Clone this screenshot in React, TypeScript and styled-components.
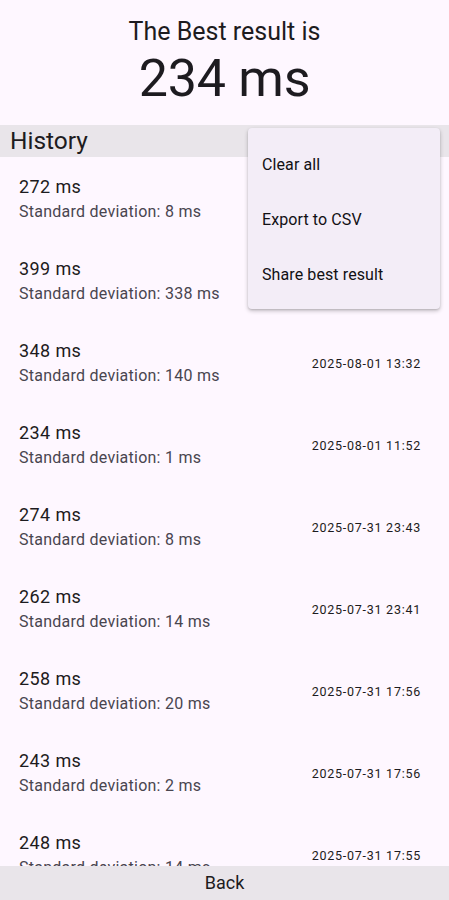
import styled, { createGlobalStyle } from "styled-components";
import { FC } from "react";

interface HistoryEntry {
  value: number;
  deviation: number;
  date: string;
}

const entries: HistoryEntry[] = [
  { value: 272, deviation: 8, date: "2025-08-01 14:10" },
  { value: 399, deviation: 338, date: "2025-08-01 13:40" },
  { value: 348, deviation: 140, date: "2025-08-01 13:32" },
  { value: 234, deviation: 1, date: "2025-08-01 11:52" },
  { value: 274, deviation: 8, date: "2025-07-31 23:43" },
  { value: 262, deviation: 14, date: "2025-07-31 23:41" },
  { value: 258, deviation: 20, date: "2025-07-31 17:56" },
  { value: 243, deviation: 2, date: "2025-07-31 17:56" },
  { value: 248, deviation: 14, date: "2025-07-31 17:55" },
];

const menuItems = ["Clear all", "Export to CSV", "Share best result"];

const App: FC = () => {
  return (
    <>
      <GlobalStyle />
      <Page>
        <Header>
          <Caption>The Best result is</Caption>
          <BestValue>234 ms</BestValue>
        </Header>
        <SectionBar>History</SectionBar>
        <List>
          {entries.map((e, i) => (
            <Row key={i}>
              <RowText>
                <RowTitle>{e.value} ms</RowTitle>
                <RowSubtitle>Standard deviation: {e.deviation} ms</RowSubtitle>
              </RowText>
              <RowDate>{e.date}</RowDate>
            </Row>
          ))}
        </List>
        <BackBar>Back</BackBar>
        <Menu>
          {menuItems.map((item) => (
            <MenuItem key={item}>{item}</MenuItem>
          ))}
        </Menu>
      </Page>
    </>
  );
};

const GlobalStyle = createGlobalStyle`
  html, body {
    margin: 0;
    padding: 0;
    background: #fef7ff;
  }
  body {
    font-family: Roboto, "Noto Sans", sans-serif;
    color: #1d1b20;
  }
`;

const Page = styled.div`
  position: relative;
  display: flex;
  flex-direction: column;
  width: 449px;
  height: 900px;
  overflow: hidden;
  background: #fef7ff;
`;

const Header = styled.div`
  display: flex;
  flex-direction: column;
  align-items: center;
  padding-top: 15px;
  height: 125px;
  box-sizing: border-box;
`;

const Caption = styled.div`
  font-size: 25px;
  line-height: 34px;
`;

const BestValue = styled.div`
  font-size: 52px;
  line-height: 60px;
  letter-spacing: -0.25px;
`;

const SectionBar = styled.div`
  height: 32px;
  line-height: 32px;
  padding-left: 10px;
  font-size: 24.5px;
  background: #e9e5ea;
`;

const List = styled.div`
  flex: 1;
  overflow: hidden;
`;

const Row = styled.div`
  display: flex;
  align-items: center;
  justify-content: space-between;
  height: 82px;
  padding: 0 28px 0 19px;
  box-sizing: border-box;
`;

const RowText = styled.div`
  display: flex;
  flex-direction: column;
`;

const RowTitle = styled.div`
  font-size: 18px;
  line-height: 26px;
  letter-spacing: 0.4px;
`;

const RowSubtitle = styled.div`
  font-size: 16px;
  line-height: 22px;
  letter-spacing: 0.25px;
  color: #49454f;
  margin-top: 1px;
`;

const RowDate = styled.div`
  font-size: 12.5px;
  letter-spacing: 0.75px;
  color: #1d1b20;
  padding-top: 2px;
`;

const BackBar = styled.div`
  height: 34px;
  line-height: 34px;
  text-align: center;
  font-size: 18px;
  background: #e9e5ea;
`;

const Menu = styled.div`
  position: absolute;
  top: 128px;
  left: 248px;
  width: 192px;
  padding: 9px 0 7px;
  background: #f3edf7;
  border-radius: 4px;
  box-shadow: 0 2px 4px rgba(0, 0, 0, 0.22), 0 1px 2px rgba(0, 0, 0, 0.12);
`;

const MenuItem = styled.div`
  height: 55px;
  display: flex;
  align-items: center;
  padding-left: 14px;
  font-size: 16px;
  letter-spacing: 0.1px;
  color: #111014;
`;

export default App;
